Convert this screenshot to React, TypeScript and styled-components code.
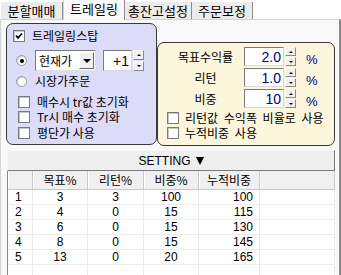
import React, { FC } from 'react';
import styled, { createGlobalStyle } from 'styled-components';

const GlobalStyle = createGlobalStyle`
  html, body {
    margin: 0;
    padding: 0;
    background: #ffffff;
  }
  body {
    font-family: "Noto Sans CJK KR", "Liberation Sans", sans-serif;
    font-size: 12px;
    color: #000;
  }
`;

const Frame = styled.div`
  width: 341px;
  height: 275px;
  overflow: hidden;
  display: flex;
  flex-direction: column;
  background: #ffffff;
`;

const TabBar = styled.div`
  display: flex;
  align-items: flex-end;
  height: 19px;
  padding-left: 1px;
`;

const Tab = styled.div<{ $active?: boolean; $w: number }>`
  width: ${(p) => p.$w}px;
  height: ${(p) => (p.$active ? 20 : 17)}px;
  box-sizing: border-box;
  display: flex;
  align-items: center;
  justify-content: center;
  font-size: 13px;
  line-height: 1;
  padding-bottom: ${(p) => (p.$active ? 3 : 0)}px;
  background: ${(p) => (p.$active ? '#f9f9f9' : '#ececec')};
  border-right: 1px solid #8c8c8c;
  border-left: ${(p) => (p.$active ? '1px solid #d0d0d0' : 'none')};
  margin-bottom: ${(p) => (p.$active ? -1 : 0)}px;
  position: relative;
  z-index: ${(p) => (p.$active ? 1 : 0)};
`;

const Panel = styled.div`
  flex: 1;
  display: flex;
  flex-direction: column;
  background: #f9f9f9;
  border-top: 1px solid #d4d4d4;
  border-left: 1px solid #d4d4d4;
  border-right: 2px solid #8a8a8a;
  padding: 3px 4px 0 5px;
  min-height: 0;
`;

const TopRow = styled.div`
  display: flex;
  align-items: flex-start;
`;

const TrailBox = styled.div`
  width: 151px;
  height: 122px;
  box-sizing: border-box;
  border: 1px solid #3a3a3a;
  border-radius: 7px;
  background: #dcdcf8;
  padding: 5px 0 0 6px;
  display: flex;
  flex-direction: column;
`;

const TargetBox = styled.div`
  width: 178px;
  height: 104px;
  margin-top: 19px;
  box-sizing: border-box;
  border: 1px solid #3a3a3a;
  border-radius: 7px;
  background: #fcf6dc;
  padding: 4px 0 0 9px;
  display: flex;
  flex-direction: column;
`;

const CheckRow = styled.label`
  display: flex;
  align-items: center;
  height: 14px;
  gap: 7px;
  line-height: 1;
  white-space: nowrap;
`;

const Box = styled.span`
  width: 12px;
  height: 12px;
  flex: none;
  box-sizing: border-box;
  background: #ffffff;
  border: 1px solid #7a7a7a;
  box-shadow: inset 1px 1px 0 #c8c8c8;
  display: inline-flex;
  align-items: center;
  justify-content: center;
`;

const Round = styled.span<{ $on?: boolean }>`
  width: 11px;
  height: 11px;
  flex: none;
  box-sizing: border-box;
  border-radius: 50%;
  background: #ffffff;
  border: 1px solid #9a9a9a;
  box-shadow: inset 1px 1px 0 #d0d0d0;
  display: inline-flex;
  align-items: center;
  justify-content: center;
  &::after {
    content: '';
    display: ${(p) => (p.$on ? 'block' : 'none')};
    width: 4px;
    height: 4px;
    border-radius: 50%;
    background: #000;
  }
`;

const Check: FC<{ on?: boolean }> = ({ on }) => (
  <Box>
    {on && (
      <svg width="8" height="8" viewBox="0 0 8 8">
        <path d="M1 3.5 L3 5.8 L7 1.5" stroke="#000" strokeWidth="1.8" fill="none" />
      </svg>
    )}
  </Box>
);

const ModeRow = styled.div`
  display: flex;
  align-items: center;
  gap: 7px;
  margin-top: 7px;
  height: 21px;
  padding-left: 3px;
`;

const RadioLabel = styled.div`
  display: flex;
  align-items: center;
  gap: 8px;
  height: 14px;
  margin-top: 3px;
  padding-left: 3px;
  line-height: 1;
`;

const Select = styled.div`
  margin-left: 1px;
  width: 61px;
  height: 21px;
  box-sizing: border-box;
  background: #ffffff;
  border: 1px solid;
  border-color: #7a7a7a #e0e0e0 #e0e0e0 #7a7a7a;
  display: flex;
  align-items: center;
  padding-left: 3px;
  font-size: 12px;
  line-height: 1;
`;

const SelectText = styled.span`
  flex: 1;
`;

const DropButton = styled.span`
  width: 15px;
  height: 17px;
  margin-right: 1px;
  box-sizing: border-box;
  background: #f0f0f0;
  border: 1px solid;
  border-color: #ffffff #6a6a6a #6a6a6a #ffffff;
  display: flex;
  align-items: center;
  justify-content: center;
`;

const Tri = styled.span<{ $up?: boolean; $s?: number; $h?: number }>`
  width: 0;
  height: 0;
  border-left: ${(p) => p.$s ?? 3}px solid transparent;
  border-right: ${(p) => p.$s ?? 3}px solid transparent;
  ${(p) =>
    p.$up
      ? `border-bottom: ${p.$h ?? p.$s ?? 3}px solid #000;`
      : `border-top: ${p.$h ?? p.$s ?? 3}px solid #000;`}
`;

const Spin = styled.div<{ $h: number }>`
  display: flex;
  align-items: stretch;
  height: ${(p) => p.$h}px;
`;

const NumField = styled.div<{ $w: number; $navy?: boolean }>`
  width: ${(p) => p.$w}px;
  box-sizing: border-box;
  background: #ffffff;
  border: 1px solid;
  border-color: #7a7a7a #d8d8d8 #d8d8d8 #7a7a7a;
  display: flex;
  align-items: center;
  justify-content: flex-end;
  padding-right: 2px;
  font-family: "Liberation Sans", Arial, sans-serif;
  font-size: 14px;
  line-height: 1;
  color: ${(p) => (p.$navy ? '#000080' : '#000')};
`;

const SpinButtons = styled.div`
  width: 11px;
  margin-left: 1px;
  display: flex;
  flex-direction: column;
  gap: 1px;
`;

const SpinButton = styled.span`
  flex: 1;
  box-sizing: border-box;
  background: #f0f0f0;
  border: 1px solid;
  border-color: #ffffff #8a8a8a #8a8a8a #ffffff;
  display: flex;
  align-items: center;
  justify-content: center;
`;

const Spinner: FC<{ value: string; w: number; h: number; navy?: boolean }> = ({ value, w, h, navy }) => (
  <Spin $h={h}>
    <NumField $w={w} $navy={navy}>
      {value}
    </NumField>
    <SpinButtons>
      <SpinButton>
        <Tri $up $s={2} />
      </SpinButton>
      <SpinButton>
        <Tri $s={2} />
      </SpinButton>
    </SpinButtons>
  </Spin>
);

const LowerChecks = styled.div`
  display: flex;
  flex-direction: column;
  margin-top: 6px;
  padding-left: 5px;
  & > label {
    height: 15.5px;
  }
`;

const FieldRow = styled.div`
  display: flex;
  align-items: center;
  height: 19px;
  margin-bottom: 2px;
`;

const FieldLabel = styled.span`
  width: 77px;
  text-align: center;
  line-height: 1;
`;

const Percent = styled.span`
  margin-left: 10px;
  align-self: flex-end;
  color: #000080;
  font-family: "Liberation Sans", Arial, sans-serif;
  font-size: 13px;
  line-height: 1;
`;

const TargetChecks = styled.div`
  display: flex;
  flex-direction: column;
  & > label {
    word-spacing: 3px;
    height: 15.5px;
    gap: 6px;
  }
`;

const SettingBar = styled.div`
  margin: 4px 0 0 1px;
  width: 328px;
  height: 21px;
  flex: none;
  box-sizing: border-box;
  background: #efefef;
  border: 1px solid;
  border-color: #f8f8f8 #7a7a7a #7a7a7a #f8f8f8;
  display: flex;
  align-items: center;
  justify-content: center;
  font-family: "Liberation Sans", Arial, sans-serif;
  font-size: 12px;
  line-height: 1;
  gap: 5px;
`;

const Grid = styled.div`
  margin-left: 1px;
  width: 327px;
  flex: 1;
  background: #ffffff;
  border-left: 1px solid #8a8a8a;
  display: grid;
  grid-template-columns: 25px 55px 56px 55px 61px 1fr;
  grid-template-rows: 19px;
  grid-auto-rows: 15px;
  align-content: start;
`;

const HeadCell = styled.div`
  background: #f0f0f0;
  border-right: 1px solid #c8c8c8;
  border-bottom: 1px solid #c8c8c8;
  box-shadow: inset 1px 0 0 #ffffff;
  display: flex;
  align-items: center;
  justify-content: center;
  line-height: 1;
  font-size: 12px;
`;

const Cell = styled.div<{ $align: 'left' | 'center' | 'right' }>`
  border-right: 1px solid #ececec;
  border-bottom: 1px solid #ececec;
  display: flex;
  align-items: center;
  justify-content: ${(p) => (p.$align === 'left' ? 'flex-start' : p.$align === 'right' ? 'flex-end' : 'center')};
  padding: 0 ${(p) => (p.$align === 'right' ? 6 : 0)}px 0 ${(p) => (p.$align === 'left' ? 7 : 0)}px;
  font-family: "Liberation Sans", Arial, sans-serif;
  font-size: 12px;
  line-height: 1;
`;

const tabs = [
  { label: '분할매매', w: 62 },
  { label: '트레일링', w: 62 },
  { label: '총잔고설정', w: 67 },
  { label: '주문보정', w: 61 },
];

const heads = ['', '목표%', '리턴%', '비중%', '누적비중', ''];
const aligns: ('left' | 'center' | 'right')[] = ['left', 'center', 'center', 'center', 'right', 'left'];

const rows = [
  ['1', '3', '3', '100', '100', ''],
  ['2', '4', '0', '15', '115', ''],
  ['3', '6', '0', '15', '130', ''],
  ['4', '8', '0', '15', '145', ''],
  ['5', '13', '0', '20', '165', ''],
  ['', '', '', '', '', ''],
];

const fields = [
  { label: '목표수익률', value: '2.0' },
  { label: '리턴', value: '1.0' },
  { label: '비중', value: '10' },
];

const App: FC = () => (
  <>
    <GlobalStyle />
    <Frame>
      <TabBar>
        {tabs.map((t, i) => (
          <Tab key={t.label} $w={t.w} $active={i === 1}>
            {t.label}
          </Tab>
        ))}
      </TabBar>
      <Panel>
        <TopRow>
          <TrailBox>
            <CheckRow>
              <Check on />
              트레일링스탑
            </CheckRow>
            <ModeRow>
              <Round $on />
              <Select>
                <SelectText>현재가</SelectText>
                <DropButton>
                  <Tri $s={4} />
                </DropButton>
              </Select>
              <Spinner value="+1" w={29} h={21} />
            </ModeRow>
            <RadioLabel>
              <Round />
              시장가주문
            </RadioLabel>
            <LowerChecks>
              <CheckRow>
                <Check />
                매수시 tr값 초기화
              </CheckRow>
              <CheckRow>
                <Check />
                Tr시 매수 초기화
              </CheckRow>
              <CheckRow>
                <Check />
                평단가 사용
              </CheckRow>
            </LowerChecks>
          </TrailBox>
          <TargetBox>
            {fields.map((f) => (
              <FieldRow key={f.label}>
                <FieldLabel>{f.label}</FieldLabel>
                <Spinner value={f.value} w={40} h={19} navy />
                <Percent>%</Percent>
              </FieldRow>
            ))}
            <TargetChecks>
              <CheckRow>
                <Check />
                리턴값 수익폭 비율로 사용
              </CheckRow>
              <CheckRow>
                <Check />
                누적비중 사용
              </CheckRow>
            </TargetChecks>
          </TargetBox>
        </TopRow>
        <SettingBar>
          SETTING
          <Tri $s={4.5} $h={8} />
        </SettingBar>
        <Grid>
          {heads.map((h, i) => (
            <HeadCell key={`h${i}`}>{h}</HeadCell>
          ))}
          {rows.map((r, ri) =>
            r.map((v, ci) => (
              <Cell key={`${ri}-${ci}`} $align={aligns[ci]}>
                {v}
              </Cell>
            ))
          )}
        </Grid>
      </Panel>
    </Frame>
  </>
);

export default App;
